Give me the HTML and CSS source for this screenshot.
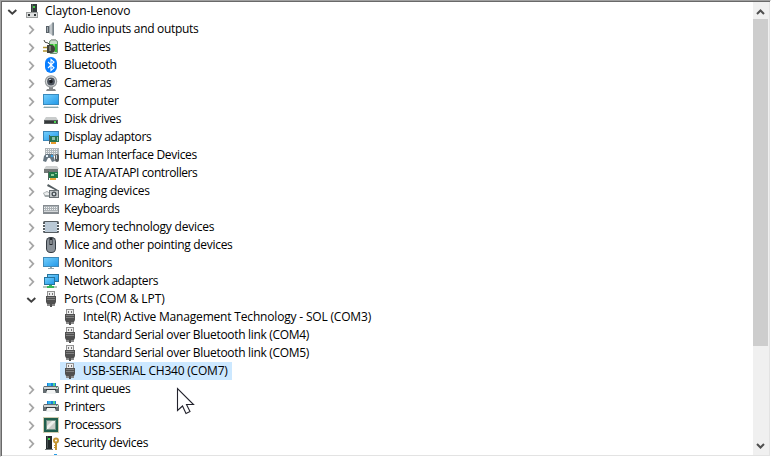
FILE: index.html
```
<!DOCTYPE html>
<html lang="en">
<head>
<meta charset="utf-8">
<title>Device Manager</title>
<link rel="stylesheet" href="styles.css">
</head>
<body>
<svg class="defs" aria-hidden="true">
<defs>
<linearGradient id="screen" x1="0" y1="0" x2="1" y2="1"><stop offset="0" stop-color="#72cdfb"/><stop offset="1" stop-color="#249bea"/></linearGradient>
<linearGradient id="metal"><stop offset="0" stop-color="#8b959c"/><stop offset=".5" stop-color="#d5dadd"/><stop offset="1" stop-color="#7c8489"/></linearGradient>
<symbol id="closed" viewBox="0 0 11 11"><path d="M3.3 1.5 7.3 5.8 3.3 10" fill="none" stroke="#a6a6a6" stroke-width="1.8"/></symbol>
<symbol id="open" viewBox="0 0 11 11"><path d="M1.3 4 5.3 7.8 9.3 4" fill="none" stroke="#404040" stroke-width="1.9"/></symbol>
<symbol id="pc" viewBox="0 0 16 16"><path d="M7 1h6v9H7z" fill="#343b3c"/><path d="M8 1h1v8H8z" fill="#59605e"/><path d="M9 3h2v2H9z" fill="#43cf45"/><path d="M2 9h12v6H2z" fill="#9a9d9d"/><path d="M3 10h10v4H3z" fill="#dcdede"/><path d="M4 11h2v2H4zm6 0h2v2h-2z" fill="#303536"/></symbol>
<symbol id="audio" viewBox="0 0 16 16"><path d="M3 5h3v7H3z" fill="#596168"/><path d="m6 5 4-4v14l-4-3z" fill="url(#metal)"/><path d="m10 1 1 1v12l-1 1z" fill="#77838b"/><path d="M4 6h1v5H4z" fill="#a2abb1"/></symbol>
<symbol id="battery" viewBox="0 0 16 16"><rect x="6.5" y="1.5" width="8" height="13" rx="1.5" fill="#c8dfc9" stroke="#71957a"/><path d="M7 5h7v8H7z" fill="#35ba35"/><path d="M10 5h2v8h-2z" fill="#85df76"/><path d="M8 0h5v2H8z" fill="#a8afa8"/><path d="M1 1q0 3 4 3l3 3" fill="none" stroke="#4b4b47"/><path d="M4 6h4q4 0 4 4t-4 4H4z" fill="#3f423c"/><path d="M0 8.5h4M0 12h4" stroke="#b39430" stroke-width="1.5"/><path d="M6 7h2v5H6z" fill="#777b70"/></symbol>
<symbol id="bluetooth" viewBox="0 0 16 16"><rect x="2" y="0" width="12" height="16" rx="6" fill="#087eff"/><path d="m5 5 6 5.8-3 2.7V2.5L11 5l-6 6" fill="none" stroke="#fff" stroke-width="1.1"/></symbol>
<symbol id="camera" viewBox="0 0 16 16"><path d="M4 14h8l1 2H3zM6 12h4v3H6z" fill="#85888a"/><circle cx="8" cy="6.5" r="6.2" fill="#989c9e"/><circle cx="8" cy="6.5" r="5" fill="#dadddf"/><circle cx="8" cy="6.5" r="3.9" fill="#4b525c"/><circle cx="8" cy="6.5" r="1.7" fill="#17191e"/><path d="M6 4h2v1H6z" fill="#b9c2cb"/></symbol>
<symbol id="computer" viewBox="0 0 16 16"><path d="M0 1h16v11H0z" fill="#398abd"/><path d="M1 2h14v9H1z" fill="url(#screen)"/><path d="M2 13h12l2 2H0z" fill="#8ca7ae"/><path d="M2 13h12v1H1z" fill="#d4e0e2"/></symbol>
<symbol id="disk" viewBox="0 0 16 16"><path d="M3 6h10l2 3H1z" fill="#c9cccc"/><path d="M1 9h14v4H1z" fill="#5b5f60"/><path d="M2 10h12v2H2z" fill="#34383a"/><path d="M11 10h2v2h-2z" fill="#4bd552"/></symbol>
<symbol id="display" viewBox="0 0 16 16"><path d="M0 2h16v10H0z" fill="#3a86b9"/><path d="M1 3h14v8H1z" fill="url(#screen)"/><path d="M6 6h1v9H6z" fill="#53605e"/><path d="M7 7h9v6H7z" fill="#277451"/><path d="M9 8h3v3H9zM14 8h1v4h-1z" fill="#8ac0a8"/><path d="M8 13h5v2H8z" fill="#e99b2c"/></symbol>
<symbol id="hid" viewBox="0 0 16 16"><path d="M2 1h14v8H2z" fill="#b0b6b9"/><path d="M3 2.5h12M3 4.5h12M3 6.5h12" stroke="#f1f2f3" stroke-dasharray="1 1"/><path d="m1 9 2-2h7l2 7-3 1-2-4H5l-2 4-3-1z" fill="#687782"/><path d="M3 8h2v2H3z" fill="#e5f1f9"/><path d="M8 8h2v2H8z" fill="#399ede"/><rect x="12" y="7" width="4" height="8" rx="2" fill="#53585a"/><path d="M13 8h1v4h-1z" fill="#c9cccc"/></symbol>
<symbol id="ide" viewBox="0 0 16 16"><path d="M3 1h11l2 3H1z" fill="#d0d2d2"/><path d="M1 4h14v4H1z" fill="#747978"/><path d="M5 6h1v9H5z" fill="#4e6259"/><path d="M6 7h9v6H6z" fill="#217949"/><path d="M8 9h3v2H8zM12 8h2v1h-2z" fill="#8ed09b"/><path d="M7 13h6v2H7z" fill="#e9aa36"/></symbol>
<symbol id="imaging" viewBox="0 0 16 16"><path d="m5 1 10 6-1 1L4 3z" fill="#555e62"/><path d="m0 10 4-2 5 3-1 3H2z" fill="#a2a9ab"/><path d="m1 10 3-1 4 2-1 1H2z" fill="#eceeee"/><path d="M6 7h10v8H6z" fill="#697074"/><path d="M7 8h8v6H7z" fill="#c2c7c9"/><circle cx="11" cy="11" r="2.5" fill="#444c51"/><circle cx="11" cy="11" r="1.2" fill="#d4dce0"/></symbol>
<symbol id="keyboard" viewBox="0 0 16 16"><path d="M0 4h16v9H0z" fill="#858b90"/><path d="M1 5h14v5H1z" fill="#acb2b6"/><path d="M1 6.5h14M1 8.5h14" stroke="#f1f3f4" stroke-dasharray="1 1"/><path d="M1 10h14v1H1z" fill="#d4d7d9"/></symbol>
<symbol id="memory" viewBox="0 0 16 16"><rect x="0" y="2" width="16" height="12" rx="1.5" fill="#565d62"/><path d="M2 3h12v10H2z" fill="#bac9d6"/><path d="M0 5h2v1H0zm0 3h2v1H0zm0 3h2v1H0zm14-6h2v1h-2zm0 3h2v1h-2zm0 3h2v1h-2z" fill="#fff"/></symbol>
<symbol id="mouse" viewBox="0 0 16 16"><rect x="3" y="0" width="10" height="16" rx="4.5" fill="#343b42"/><rect x="4" y="1" width="8" height="14" rx="3.5" fill="#8b9299"/><path d="M6.5 1h3v7h-3z" fill="#22272c"/><path d="M7.5 3h1v4h-1z" fill="#dde1e3"/></symbol>
<symbol id="monitor" viewBox="0 0 16 16"><path d="M0 2h16v10H0z" fill="#3f89b7"/><path d="M1 3h14v8H1z" fill="url(#screen)"/><path d="M7 12h2v1h2v1H5v-1h2z" fill="#91a5ac"/></symbol>
<symbol id="network" viewBox="0 0 16 16"><path d="M4 1h12v8H4z" fill="#26739d"/><path d="M5 2h10v6H5z" fill="url(#screen)"/><path d="M1 4h11v8H1z" fill="#26739d"/><path d="M2 5h9v6H2z" fill="url(#screen)"/><path d="M0 13h14v2H0z" fill="#b7c5bc"/><path d="M6 12h3v1h2v2H4v-2h2z" fill="#38b657"/></symbol>
<symbol id="port" viewBox="0 0 16 16"><path d="M4 0h8v6H4z" fill="#929292"/><path d="M5 1h6v4H5z" fill="#ededed"/><path d="M6 2h1v2H6zm3 0h1v2H9z" fill="#777"/><path d="M3 5h10v6l-1 2H4l-1-2z" fill="#505050"/><path d="M4 6h8v1H4zm0 2h8v1H4z" fill="#808080"/><path d="M4 13h3v2H4zm5 0h3v2H9z" fill="#898989"/><path d="M7 12h2v4H7z" fill="#505050"/></symbol>
<symbol id="printer" viewBox="0 0 16 16"><path d="M4 2h9v4H4z" fill="#1681dc"/><path d="M5 2h3v3H5z" fill="#36b3ea"/><path d="M10 2h2v3h-2z" fill="#4cd38f"/><path d="M1 5h14l1 2v5H0V7z" fill="#636c70"/><path d="M1 6h14v2H1z" fill="#d0d4d5"/><path d="M3 8h10v2H3z" fill="#343d41"/><path d="M4 9h8l1 4H3z" fill="#f1f3f3"/><path d="M13 6h1v1h-1z" fill="#44bb6e"/></symbol>
<symbol id="cpu" viewBox="0 0 16 16"><path d="M.5.5h15v15H.5z" fill="none" stroke="#a39b62" stroke-dasharray="1 1"/><path d="M1 1h14v14H1z" fill="#205f4d"/><path d="M3 3h10v10H3z" fill="#719184"/><path d="M4 4h8v8H4z" fill="#c9ccc7"/><path d="m4 9 5-5h3v1l-7 7H4z" fill="#edf0ec"/></symbol>
<symbol id="security" viewBox="0 0 16 16"><path d="M3 1h6v13H3z" fill="#242a2c"/><path d="M4 1h1v12H4z" fill="#485153"/><path d="M5 3h2v2H5z" fill="#3cdb4a"/><path d="M2 14h8v1H2z" fill="#777d7e"/><circle cx="13" cy="5.5" r="2" fill="none" stroke="#c59632" stroke-width="2"/><path d="M12 7h2v8h-2zM11 10h2v1h-2zm0 2h2v1h-2z" fill="#c59632"/></symbol>
<symbol id="component" viewBox="0 0 16 16"><path d="M3 2h8v2H3z" fill="#a3adb3"/><path d="M11 1h3v3h-3z" fill="#299de6"/></symbol>
</defs>
</svg>
<main class="window">
<ul class="tree">
<li class="row root"><svg class="arrow"><use href="#open"/></svg><svg class="icon"><use href="#pc"/></svg><span class="label wide">Clayton-Lenovo</span></li>
<li class="row"><svg class="arrow"><use href="#closed"/></svg><svg class="icon"><use href="#audio"/></svg><span class="label snug">Audio inputs and outputs</span></li>
<li class="row"><svg class="arrow"><use href="#closed"/></svg><svg class="icon"><use href="#battery"/></svg><span class="label tight">Batteries</span></li>
<li class="row"><svg class="arrow"><use href="#closed"/></svg><svg class="icon"><use href="#bluetooth"/></svg><span class="label snug">Bluetooth</span></li>
<li class="row"><svg class="arrow"><use href="#closed"/></svg><svg class="icon"><use href="#camera"/></svg><span class="label snug">Cameras</span></li>
<li class="row"><svg class="arrow"><use href="#closed"/></svg><svg class="icon"><use href="#computer"/></svg><span class="label">Computer</span></li>
<li class="row"><svg class="arrow"><use href="#closed"/></svg><svg class="icon"><use href="#disk"/></svg><span class="label snug">Disk drives</span></li>
<li class="row"><svg class="arrow"><use href="#closed"/></svg><svg class="icon"><use href="#display"/></svg><span class="label tight">Display adaptors</span></li>
<li class="row"><svg class="arrow"><use href="#closed"/></svg><svg class="icon"><use href="#hid"/></svg><span class="label snug">Human Interface Devices</span></li>
<li class="row"><svg class="arrow"><use href="#closed"/></svg><svg class="icon"><use href="#ide"/></svg><span class="label tight">IDE ATA/ATAPI controllers</span></li>
<li class="row"><svg class="arrow"><use href="#closed"/></svg><svg class="icon"><use href="#imaging"/></svg><span class="label">Imaging devices</span></li>
<li class="row"><svg class="arrow"><use href="#closed"/></svg><svg class="icon"><use href="#keyboard"/></svg><span class="label tight">Keyboards</span></li>
<li class="row"><svg class="arrow"><use href="#closed"/></svg><svg class="icon"><use href="#memory"/></svg><span class="label">Memory technology devices</span></li>
<li class="row"><svg class="arrow"><use href="#closed"/></svg><svg class="icon"><use href="#mouse"/></svg><span class="label snug">Mice and other pointing devices</span></li>
<li class="row"><svg class="arrow"><use href="#closed"/></svg><svg class="icon"><use href="#monitor"/></svg><span class="label snug">Monitors</span></li>
<li class="row"><svg class="arrow"><use href="#closed"/></svg><svg class="icon"><use href="#network"/></svg><span class="label tight">Network adapters</span></li>
<li class="row"><svg class="arrow"><use href="#open"/></svg><svg class="icon"><use href="#port"/></svg><span class="label wide">Ports (COM &amp; LPT)</span></li>
<li class="row leaf"><svg class="icon"><use href="#port"/></svg><span class="label long">Intel(R) Active Management Technology - SOL (COM3)</span></li>
<li class="row leaf"><svg class="icon"><use href="#port"/></svg><span class="label snug">Standard Serial over Bluetooth link (COM4)</span></li>
<li class="row leaf"><svg class="icon"><use href="#port"/></svg><span class="label snug">Standard Serial over Bluetooth link (COM5)</span></li>
<li class="row leaf selected"><svg class="icon"><use href="#port"/></svg><span class="label">USB-SERIAL CH340 (COM7)</span></li>
<li class="row"><svg class="arrow"><use href="#closed"/></svg><svg class="icon"><use href="#printer"/></svg><span class="label tight">Print queues</span></li>
<li class="row"><svg class="arrow"><use href="#closed"/></svg><svg class="icon"><use href="#printer"/></svg><span class="label tight">Printers</span></li>
<li class="row"><svg class="arrow"><use href="#closed"/></svg><svg class="icon"><use href="#cpu"/></svg><span class="label tight">Processors</span></li>
<li class="row"><svg class="arrow"><use href="#closed"/></svg><svg class="icon"><use href="#security"/></svg><span class="label snug">Security devices</span></li>
<li class="row"><svg class="arrow"></svg><svg class="icon"><use href="#component"/></svg></li>
</ul>
<aside class="scrollbar">
<svg class="scroll-button" viewBox="0 0 15 17"><path d="M4 12 7.5 8.5 11 12" fill="none" stroke="#505050" stroke-width="2"/></svg>
<div class="thumb"></div>
<svg class="scroll-button down" viewBox="0 0 15 17"><path d="M4 6 7.5 9.5 11 6" fill="none" stroke="#505050" stroke-width="2"/></svg>
</aside>
</main>
<svg class="cursor" viewBox="0 0 19 28"><path d="M1.5 1.5v22l5-4.5 3.5 7.5 4-2-3.5-7h7z" fill="#fff" stroke="#23232d" stroke-width="1.1"/></svg>
</body>
</html>
```
FILE: styles.css
```
*{box-sizing:border-box}
body{margin:0;width:771px;height:457px;overflow:hidden;background:#fff;color:#000;font:12px/18px "Open Sans","Noto Sans",sans-serif}
.defs{position:absolute;width:0;height:0}
.window{display:flex;width:771px;height:457px;border:1px solid;border-color:#a0a0a0 #fff #fff #a0a0a0;overflow:hidden;box-shadow:inset 1px 1px #696969,inset -1px -1px #e3e3e3;padding:1px}
.tree{flex:1;margin:0;padding:0;list-style:none;overflow:hidden}
.row{display:flex;align-items:center;height:18px;padding-left:24px;white-space:nowrap}
.root{padding-left:5px}
.leaf{padding-left:60px}
.arrow{width:11px;height:11px;flex:none;margin-right:6px}
.root .arrow{margin-right:6px}
.icon{width:16px;height:16px;flex:none;margin-right:2px}
.root .icon{margin-right:2px}
.label{padding:0 3px;letter-spacing:-.22px}
.snug{letter-spacing:-.31px}
.tight{letter-spacing:-.41px}
.wide{letter-spacing:-.1px}
.long{letter-spacing:-.18px}
.selected{width:230px;background:linear-gradient(to right,transparent 58px,#cce8ff 58px)}
.scrollbar{display:flex;flex-direction:column;width:16px;height:453px;background:#f0f0f0}
.scroll-button{width:15px;height:17px;flex:none}
.thumb{width:15px;height:327px;background:#cdcdcd}
.down{margin-top:auto}
.cursor{position:absolute;left:176px;top:387px;width:19px;height:28px}
```
